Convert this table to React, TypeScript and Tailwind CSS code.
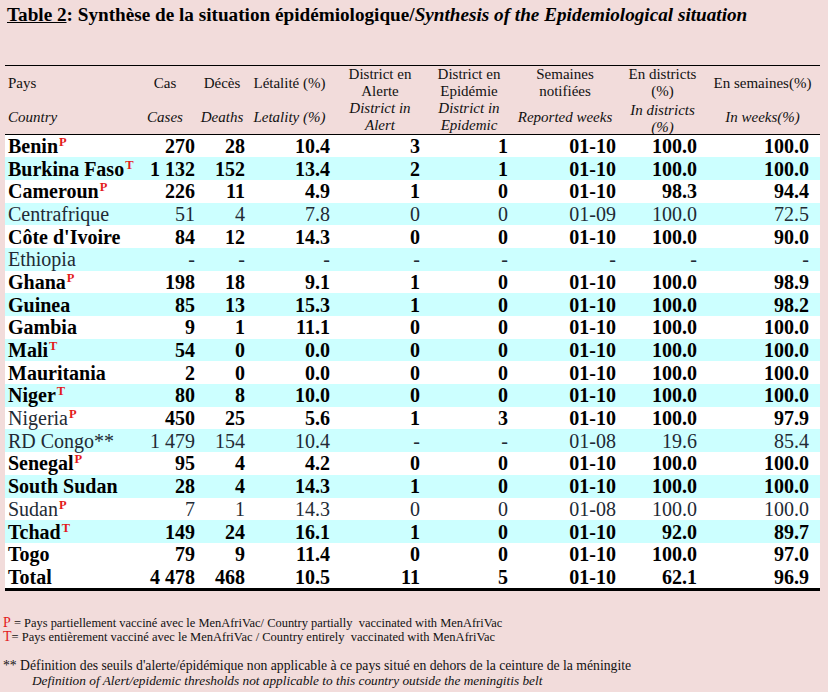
import React from "react";

type Row = { n: string; s?: string; nb: boolean; vb: boolean; v: string[] };

const rows: Row[] = [
  { n: "Benin", s: "P", nb: true, vb: true, v: ["270", "28", "10.4", "3", "1", "01-10", "100.0", "100.0"] },
  { n: "Burkina Faso", s: "T", nb: true, vb: true, v: ["1 132", "152", "13.4", "2", "1", "01-10", "100.0", "100.0"] },
  { n: "Cameroun", s: "P", nb: true, vb: true, v: ["226", "11", "4.9", "1", "0", "01-10", "98.3", "94.4"] },
  { n: "Centrafrique", nb: false, vb: false, v: ["51", "4", "7.8", "0", "0", "01-09", "100.0", "72.5"] },
  { n: "Côte d'Ivoire", nb: true, vb: true, v: ["84", "12", "14.3", "0", "0", "01-10", "100.0", "90.0"] },
  { n: "Ethiopia", nb: false, vb: false, v: ["-", "-", "-", "-", "-", "-", "-", "-"] },
  { n: "Ghana", s: "P", nb: true, vb: true, v: ["198", "18", "9.1", "1", "0", "01-10", "100.0", "98.9"] },
  { n: "Guinea", nb: true, vb: true, v: ["85", "13", "15.3", "1", "0", "01-10", "100.0", "98.2"] },
  { n: "Gambia", nb: true, vb: true, v: ["9", "1", "11.1", "0", "0", "01-10", "100.0", "100.0"] },
  { n: "Mali", s: "T", nb: true, vb: true, v: ["54", "0", "0.0", "0", "0", "01-10", "100.0", "100.0"] },
  { n: "Mauritania", nb: true, vb: true, v: ["2", "0", "0.0", "0", "0", "01-10", "100.0", "100.0"] },
  { n: "Niger", s: "T", nb: true, vb: true, v: ["80", "8", "10.0", "0", "0", "01-10", "100.0", "100.0"] },
  { n: "Nigeria", s: "P", nb: false, vb: true, v: ["450", "25", "5.6", "1", "3", "01-10", "100.0", "97.9"] },
  { n: "RD Congo**", nb: false, vb: false, v: ["1 479", "154", "10.4", "-", "-", "01-08", "19.6", "85.4"] },
  { n: "Senegal", s: "P", nb: true, vb: true, v: ["95", "4", "4.2", "0", "0", "01-10", "100.0", "100.0"] },
  { n: "South Sudan", nb: true, vb: true, v: ["28", "4", "14.3", "1", "0", "01-10", "100.0", "100.0"] },
  { n: "Sudan", s: "P", nb: false, vb: false, v: ["7", "1", "14.3", "0", "0", "01-08", "100.0", "100.0"] },
  { n: "Tchad", s: "T", nb: true, vb: true, v: ["149", "24", "16.1", "1", "0", "01-10", "92.0", "89.7"] },
  { n: "Togo", nb: true, vb: true, v: ["79", "9", "11.4", "0", "0", "01-10", "100.0", "97.0"] },
  { n: "Total", nb: true, vb: true, v: ["4 478", "468", "10.5", "11", "5", "01-10", "62.1", "96.9"] },
];

const widths = ["w-[128px]", "w-[64px]", "w-[50px]", "w-[85px]", "w-[96px]", "w-[82px]", "w-[110px]", "w-[85px]", "w-[115px]"];
const pads = ["pr-[2px]", "pr-[2px]", "pr-[2px]", "pr-[8px]", "pr-[2px]", "pr-[4px]", "pr-[8px]", "pr-[11px]"];

export default function App() {
  return (
    <div className="w-[828px] h-[692px] bg-[#f2dcdb] text-black overflow-hidden font-['Liberation_Serif',serif]">
      <div className="pl-[7px] pt-[3px] h-[65px] text-[19.2px] font-bold leading-[24px]">
        <span className="underline">Table 2</span>: Synthèse de la situation épidémiologique/
        <span className="italic">Synthesis of the Epidemiological situation</span>
      </div>
      <table className="ml-[5px] w-[815px] table-fixed border-collapse">
        <colgroup>
          {widths.map((w, i) => (
            <col key={i} className={w} />
          ))}
        </colgroup>
        <thead className="text-[15px] leading-[17px] text-[#111]">
          <tr className="h-[34px] border-t border-black">
            <td className="pl-[3px] align-middle">Pays</td>
            <td className="text-center">Cas</td>
            <td className="text-center">Décès</td>
            <td className="text-center">Létalité (%)</td>
            <td className="text-center">District en<br />Alerte</td>
            <td className="text-center">District en<br />Epidémie</td>
            <td className="text-center">Semaines<br />notifiées</td>
            <td className="text-center">En districts<br />(%)</td>
            <td className="text-center">En semaines(%)</td>
          </tr>
          <tr className="h-[34px] italic border-b-[1.5px] border-black">
            <td className="pl-[3px]">Country</td>
            <td className="text-center">Cases</td>
            <td className="text-center">Deaths</td>
            <td className="text-center">Letality (%)</td>
            <td className="text-center">District in<br />Alert</td>
            <td className="text-center">District in<br />Epidemic</td>
            <td className="text-center">Reported weeks</td>
            <td className="text-center">
              <div className="h-[33px] pt-[1px] overflow-hidden">In districts<br />(%)</div>
            </td>
            <td className="text-center">In weeks(%)</td>
          </tr>
        </thead>
        <tbody className="text-[20px] leading-[22px] border-b-[3px] border-black">
          {rows.map((r, i) => (
            <tr key={r.n} className={`h-[22.7px] ${i % 2 === 1 && i < 19 ? "bg-[#ccffff]" : "bg-white"}`}>
              <td className={`pl-[3px] whitespace-nowrap ${r.nb ? "font-bold text-black" : "text-[#222a35]"}`}>
                {r.n}
                {r.s && (
                  <sup className="text-[12.5px] font-bold text-[#e31b1b] ml-[1px] top-[-7px]">{r.s}</sup>
                )}
              </td>
              {r.v.map((v, j) => (
                <td
                  key={j}
                  className={`text-right whitespace-nowrap ${pads[j]} ${r.vb ? "font-bold text-black" : "text-[#222a35]"} ${v === "-" ? "text-[#8a8f96]" : ""}`}
                >
                  {v}
                </td>
              ))}
            </tr>
          ))}
        </tbody>
      </table>
      <div className="pl-[3px] pt-[25px] text-[#111]">
        <div className="text-[12.45px] leading-[13px]">
          <span className="text-[#e31b1b] text-[14px] leading-[13px]">P</span> = Pays partiellement vacciné avec le MenAfriVac/ Country partially&nbsp; vaccinated with MenAfriVac
        </div>
        <div className="text-[12.5px] leading-[13px]">
          <span className="text-[#e31b1b] text-[14px] leading-[13px]">T</span>= Pays entièrement vacciné avec le MenAfriVac / Country entirely&nbsp; vaccinated with MenAfriVac
        </div>
        <div className="mt-[15px] text-[13.7px] leading-[14px]">
          ** Définition des seuils d'alerte/épidémique non applicable à ce pays situé en dehors de la ceinture de la méningite
        </div>
        <div className="mt-[1px] pl-[29px] italic text-[13.3px] leading-[14px]">
          Definition of Alert/epidemic thresholds not applicable to this country outside the meningitis belt
        </div>
      </div>
    </div>
  );
}
